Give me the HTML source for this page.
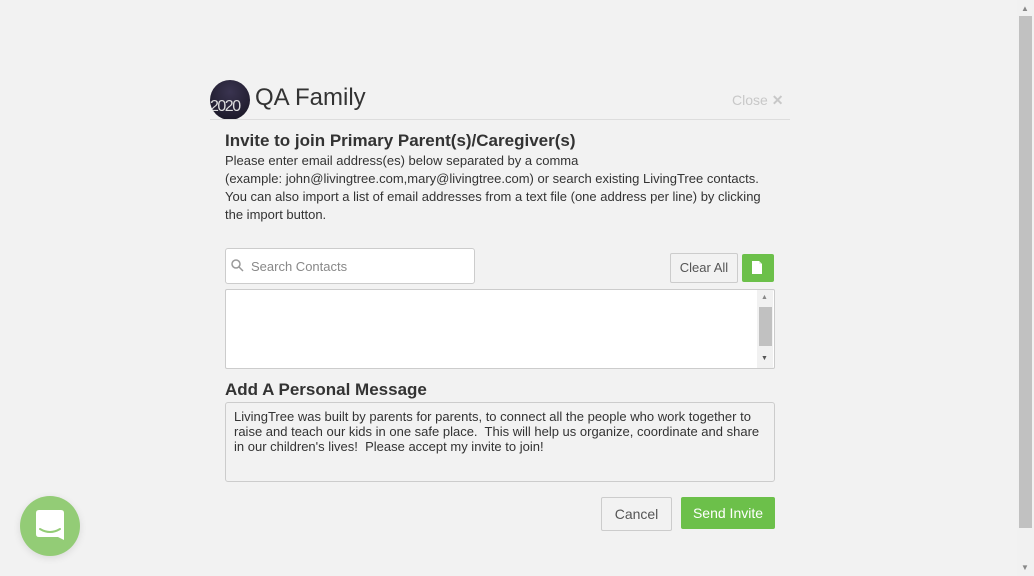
<!DOCTYPE html>
<html><head><style>
body{margin:0;width:1034px;height:576px;background:#f2f2f2;font-family:"Liberation Sans",sans-serif;position:relative;overflow:hidden;color:#333}
.a{position:absolute}
</style></head><body>
<div class="a" style="left:1017px;top:0;width:17px;height:576px;background:#f1f1f1"></div>
<div class="a" style="left:1019px;top:16px;width:13px;height:512px;background:#c1c1c1"></div>
<div class="a" style="left:1021px;top:4px;font-size:8px;color:#888">▲</div>
<div class="a" style="left:1021px;top:563px;font-size:8px;color:#888">▼</div>

<div class="a" style="left:210px;top:80px;width:40px;height:40px;border-radius:50%;background:radial-gradient(circle at 50% 30%,#3a3450,#151320);overflow:hidden">
<div style="position:absolute;left:0px;top:18px;color:#ddd;font-size:16px;letter-spacing:-1.5px;font-weight:300">2020</div></div>
<div class="a" style="left:255px;top:84px;font-size:24px;color:#333">QA Family</div>
<div class="a" style="left:732px;top:92px;font-size:14px;color:#c8c8c8">Close <b>✕</b></div>
<div class="a" style="left:210px;top:119px;width:580px;height:1px;background:#ddd"></div>

<div class="a" style="left:225px;top:131px;font-size:17px;font-weight:bold">Invite to join Primary Parent(s)/Caregiver(s)</div>
<div class="a" style="left:225px;top:152px;width:550px;font-size:13px;line-height:18px">Please enter email address(es) below separated by a comma<br>(example: john@livingtree.com,mary@livingtree.com) or search existing LivingTree contacts. You can also import a list of email addresses from a text file (one address per line) by clicking the import button.</div>

<div class="a" style="left:225px;top:248px;width:248px;height:34px;background:#fff;border:1px solid #ccc;border-radius:3px"></div>
<svg class="a" style="left:231px;top:259px" width="13" height="13"><circle cx="5" cy="5" r="4" fill="none" stroke="#999" stroke-width="1.5"/><line x1="8" y1="8" x2="12" y2="12" stroke="#999" stroke-width="1.5"/></svg>
<div class="a" style="left:251px;top:259px;font-size:13px;color:#888">Search Contacts</div>
<div class="a" style="left:670px;top:253px;width:66px;height:28px;border:1px solid #ccc;border-radius:2px;background:#f2f2f2;font-size:13px;color:#555;text-align:center;line-height:28px">Clear All</div>
<div class="a" style="left:742px;top:254px;width:32px;height:28px;background:#6cc04a;border-radius:2px"></div>
<svg class="a" style="left:752px;top:261px" width="11" height="13"><path d="M0 0H7L10 3V13H0Z" fill="#fff"/><path d="M7 0V3H10" fill="#e9f5e3"/></svg>

<div class="a" style="left:225px;top:289px;width:548px;height:78px;background:#fff;border:1px solid #ccc;border-radius:2px"></div>
<div class="a" style="left:757px;top:290px;width:16px;height:78px;background:#f1f1f1"></div>
<div class="a" style="left:759px;top:307px;width:13px;height:39px;background:#c1c1c1"></div>
<div class="a" style="left:761px;top:294px;font-size:7px;color:#888">▲</div>
<div class="a" style="left:761px;top:355px;font-size:7px;color:#555">▼</div>

<div class="a" style="left:225px;top:380px;font-size:17px;font-weight:bold">Add A Personal Message</div>
<div class="a" style="left:225px;top:402px;width:532px;height:62px;border:1px solid #ccc;border-radius:3px;background:#f2f2f2;padding:6px 8px 10px;font-size:13px;line-height:15px;color:#333">LivingTree was built by parents for parents, to connect all the people who work together to raise and teach our kids in one safe place.&nbsp; This will help us organize, coordinate and share in our children's lives!&nbsp; Please accept my invite to join!</div>

<div class="a" style="left:601px;top:497px;width:69px;height:32px;border:1px solid #ccc;border-radius:2px;font-size:14px;color:#555;text-align:center;line-height:33px">Cancel</div>
<div class="a" style="left:681px;top:497px;width:94px;height:32px;background:#6cc04a;border-radius:2px;font-size:14px;color:#fff;text-align:center;line-height:32px">Send Invite</div>

<div class="a" style="left:20px;top:496px;width:60px;height:60px;border-radius:50%;background:#93cc76;box-shadow:0 2px 8px rgba(0,0,0,.1)"></div>
<svg class="a" style="left:36px;top:510px" width="28" height="32"><path d="M3 0H25Q28 0 28 3V30L22 27H3Q0 27 0 24V3Q0 0 3 0Z" fill="#fff"/><path d="M4 19Q14 25 24 19" fill="none" stroke="#93cc76" stroke-width="2" stroke-linecap="round"/></svg>
</body></html>
